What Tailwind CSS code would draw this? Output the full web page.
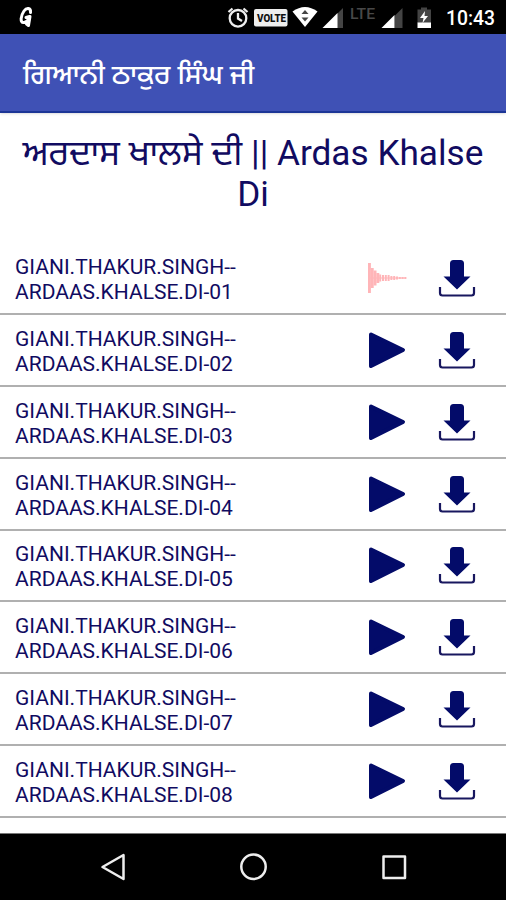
<!DOCTYPE html>
<html lang="pa">
<head>
  <meta charset="UTF-8" />
  <meta name="viewport" content="width=device-width, initial-scale=1.0" />
  <title>ਗਿਆਨੀ ਠਾਕੁਰ ਸਿੰਘ ਜੀ</title>
  <script src="https://cdn.jsdelivr.net/npm/@tailwindcss/browser@4"></script>
</head>
<body class="bg-white font-[Roboto,'Noto_Sans_Gurmukhi',sans-serif]">
<div class="w-[506px] h-[900px] flex flex-col overflow-hidden">

  <!-- status bar -->
  <div class="h-[34px] shrink-0 bg-black">
    <svg class="block" width="506" height="34" viewBox="0 0 506 34">
      <!-- app badge -->
      <path d="M30.500 12.500C31 7.500 26.500 7.500 24 11C20.500 16 20 22.500 23.500 22.500C26.500 22.500 28.500 20 29.500 16.500L26 17.500M30 16.500L28.500 25.500L26.500 24" fill="none" stroke="#fff" stroke-width="3" stroke-linecap="round" stroke-linejoin="round" />
      <!-- alarm -->
      <g fill="none" stroke="#eee" stroke-width="2.3">
        <circle cx="238" cy="18.3" r="8.300" />
        <path d="M238 13v5.5l4 2.5M228.500 12l4-3.500M247.500 12l-4-3.500" />
      </g>
      <rect x="254" y="9" width="33.500" height="17.500" rx="2" fill="#eee" />
      <text x="257" y="21.500" font-family="Roboto" font-weight="900" font-size="10.500" textLength="29" lengthAdjust="spacingAndGlyphs" fill="#111">VOLTE</text>
      <!-- wifi -->
      <path d="M292.500 11.500Q305 2.500 317.500 11.500L305 27z" fill="#fff" />
      <path d="M301.500 14l3.500-4 3.500 4zM301.500 17.500h7l-3.500 4z" fill="#444" />
      <!-- signal -->
      <path d="M343 8v20h-6V14z" fill="#444" />
      <path d="M322.500 28L337.500 13v15z" fill="#fff" />
      <text x="350" y="18.500" font-family="Roboto" font-weight="500" font-size="15" textLength="25" lengthAdjust="spacingAndGlyphs" fill="#484848">LTE</text>
      <path d="M402.500 8v20h-8V16z" fill="#444" />
      <path d="M381.500 28L394.500 15v13z" fill="#fff" />
      <!-- battery -->
      <path d="M417.500 9.500h3.500v-2h6v2h4V23h-13.500z" fill="#444" />
      <path d="M417.500 22.500h13.500V28h-13.500z" fill="#fff" />
      <path d="M425 11l-5 7h3.500l-1 5 5.500-7h-3.500z" fill="#fff" />
      <text x="446" y="25" font-family="Roboto" font-weight="500" font-size="20" textLength="49" lengthAdjust="spacingAndGlyphs" fill="#fff">10:43</text>
    </svg>
  </div>

  <!-- app bar -->
  <header class="h-[79px] shrink-0 bg-[#3f51b5] border-b-2 border-[#1c3596] shadow-sm flex items-center px-[23px] pt-[5px]">
    <h1 class="text-white text-[27.5px] font-medium leading-none whitespace-nowrap">ਗਿਆਨੀ ਠਾਕੁਰ ਸਿੰਘ ਜੀ</h1>
  </header>

  <main class="flex-1 min-h-0 overflow-hidden text-[#110b61] border-b border-[#777]">
    <h2 class="h-[130.5px] pt-[20px] px-4 text-center text-[35.2px] leading-[41px]">ਅਰਦਾਸ ਖਾਲਸੇ ਦੀ || Ardas Khalse Di</h2>
    <div id="list"></div>
  </main>

  <!-- navigation bar -->
  <nav class="h-[66px] shrink-0 bg-black">
    <svg class="block" width="506" height="66" viewBox="0 0 506 66" fill="none" stroke="#eee" stroke-width="2.5" stroke-linejoin="round">
      <path d="M102.500 33L123.500 21v24z" />
      <circle cx="253.500" cy="32.700" r="12.200" />
      <rect x="383.500" y="22.500" width="21.500" height="21.500" />
    </svg>
  </nav>
</div>

<script>
  const list = document.getElementById("list");

  const playIcon = `
    <svg class="block" width="40" height="40" viewBox="0 0 40 40">
      <path d="M4 4.500L36 20 4 36z" fill="#030b69" stroke="#030b69" stroke-width="4" stroke-linejoin="round" />
    </svg>`;

  // heights of the equalizer bars, left to right
  const bars = [30, 20, 15, 10, 7, 6, 6, 6, 4, 4, 3, 2, 2, 2];
  const waveIcon = `
    <svg class="block" width="40" height="40" viewBox="0 0 40 40">
      <path d="M1 20h38" stroke="#ffb5b8" stroke-width="1" />
      ${bars.map((h, i) => `<rect x="${1 + i * 2.8}" y="${20 - h / 2}" width="${i < 4 ? 2.9 : 2}" height="${h}" fill="#ffb5b8" />`).join("")}
    </svg>`;

  const downloadIcon = `
    <svg class="block" width="38" height="40" viewBox="0 0 38 40">
      <path d="M12 5.500q0-3.500 3.500-3.500h7q3.500 0 3.500 3.500v13h6.500L19 31.500 5.500 18.500H12z" fill="#030b69" />
      <path d="M2 29v6q0 2.500 2.500 2.500h29q2.500 0 2.500-2.500v-6" fill="none" stroke="#18175f" stroke-width="2.200" />
    </svg>`;

  for (let i = 1; i <= 8; i++) {
    const row = document.createElement("div");
    row.className = "h-[71.75px] border-b-2 border-[#b0b0b0] pl-[15px] pr-[30px] flex items-center";
    row.innerHTML = `
      <p class="flex-1 pt-[4px] text-[21px] leading-[25px]">GIANI.THAKUR.SINGH--<br>ARDAAS.KHALSE.DI-0${i}</p>
      <button class="mr-[31px]">${i === 1 ? waveIcon : playIcon}</button>
      <button>${downloadIcon}</button>
    `;
    list.appendChild(row);
  }
</script>
</body>
</html>
